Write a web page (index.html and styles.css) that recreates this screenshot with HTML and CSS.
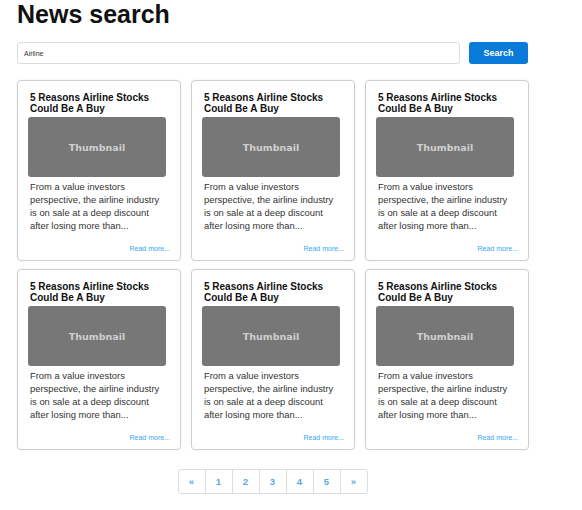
FILE: index.html
```html
<!DOCTYPE html>
<html lang="en">
<head>
    <meta charset="UTF-8">
    <meta name="viewport" content="width=device-width, initial-scale=1.0">
    <title>News search</title>
    <link rel="stylesheet" href="styles.css">
</head>
<body>
    <div id="container">
        <h1>News search</h1>

        <form class="search-bar">
            <input type="text" class="search-input" value="Airline">
            <button type="button" class="search-button">Search</button>
        </form>

        <div class="results">
            <div class="card">
                <h2 class="card-title">5 Reasons Airline Stocks Could Be A Buy</h2>
                <div class="thumb">Thumbnail</div>
                <p class="card-text">From a value investors perspective, the airline industry is on sale at a deep discount after losing more than...</p>
                <a class="read-more" href="#">Read more...</a>
            </div>
            <div class="card">
                <h2 class="card-title">5 Reasons Airline Stocks Could Be A Buy</h2>
                <div class="thumb">Thumbnail</div>
                <p class="card-text">From a value investors perspective, the airline industry is on sale at a deep discount after losing more than...</p>
                <a class="read-more" href="#">Read more...</a>
            </div>
            <div class="card">
                <h2 class="card-title">5 Reasons Airline Stocks Could Be A Buy</h2>
                <div class="thumb">Thumbnail</div>
                <p class="card-text">From a value investors perspective, the airline industry is on sale at a deep discount after losing more than...</p>
                <a class="read-more" href="#">Read more...</a>
            </div>
            <div class="card">
                <h2 class="card-title">5 Reasons Airline Stocks Could Be A Buy</h2>
                <div class="thumb">Thumbnail</div>
                <p class="card-text">From a value investors perspective, the airline industry is on sale at a deep discount after losing more than...</p>
                <a class="read-more" href="#">Read more...</a>
            </div>
            <div class="card">
                <h2 class="card-title">5 Reasons Airline Stocks Could Be A Buy</h2>
                <div class="thumb">Thumbnail</div>
                <p class="card-text">From a value investors perspective, the airline industry is on sale at a deep discount after losing more than...</p>
                <a class="read-more" href="#">Read more...</a>
            </div>
            <div class="card">
                <h2 class="card-title">5 Reasons Airline Stocks Could Be A Buy</h2>
                <div class="thumb">Thumbnail</div>
                <p class="card-text">From a value investors perspective, the airline industry is on sale at a deep discount after losing more than...</p>
                <a class="read-more" href="#">Read more...</a>
            </div>
        </div>

        <ul class="pagination">
            <li><a href="#">&laquo;</a></li>
            <li><a href="#">1</a></li>
            <li><a href="#">2</a></li>
            <li><a href="#">3</a></li>
            <li><a href="#">4</a></li>
            <li><a href="#">5</a></li>
            <li><a href="#">&raquo;</a></li>
        </ul>
    </div>
</body>
</html>
```

FILE: styles.css
```css
body {
    font-family: "Liberation Sans", Arial, sans-serif;
    background-color: #ffffff;
    color: #333;
    margin: 0;
    padding: 0 17px;
}

#container {
    width: 512px;
}

h1 {
    font-size: 25px;
    line-height: 25px;
    color: #111;
    margin: 0 0 15px 0;
    padding-top: 2px;
}

.search-bar {
    display: flex;
    gap: 9px;
    margin: 0 1px 16px 0;
}

.search-input {
    flex: 1;
    height: 22px;
    box-sizing: border-box;
    border: 1px solid #dcdcdc; /* gris claro */
    border-radius: 3px;
    padding: 0 6px;
    font-family: "Liberation Sans", Arial, sans-serif;
    font-size: 7px;
    color: #333;
    outline: none;
}

.search-button {
    width: 59px;
    height: 22px;
    border: none;
    border-radius: 3px;
    background-color: #0a7ad8; /* azul */
    color: #ffffff;
    font-family: "Liberation Sans", Arial, sans-serif;
    font-size: 9px;
    font-weight: bold;
    padding: 0;
}

.results {
    display: grid;
    grid-template-columns: repeat(3, 164px);
    column-gap: 10px;
    row-gap: 8px;
}

.card {
    border: 1px solid #cfcfcf;
    border-radius: 4px;
    padding: 12px 10px 7px 10px;
    box-shadow: 0 0 2px rgba(0, 0, 0, 0.08);
}

.card-title {
    font-size: 10px;
    line-height: 10.5px;
    font-weight: bold;
    color: #111;
    margin: 0 2px;
}

.thumb {
    width: 138px;
    height: 60px;
    margin: 3px 0;
    background-color: #777777;
    border-radius: 3px;
    display: flex;
    align-items: center;
    justify-content: center;
    font-family: "DejaVu Sans", sans-serif;
    font-size: 9.5px;
    font-weight: bold;
    color: #cfcfcf;
}

.card-text {
    font-size: 9.4px;
    line-height: 13px;
    color: #333;
    margin: 0 2px;
}

.read-more {
    display: block;
    margin-top: 12px;
    font-size: 7px;
    line-height: 9px;
    text-align: right;
    color: #3aa6f5; /* celeste */
    text-decoration: none;
}

.pagination {
    list-style: none;
    display: flex;
    justify-content: center;
    margin: 19px 0 0 0;
    padding: 0;
}

.pagination li a {
    display: flex;
    align-items: center;
    justify-content: center;
    width: 26px;
    height: 23px;
    border: 1px solid #dddddd;
    margin-left: -1px;
    font-size: 9.5px;
    font-weight: bold;
    color: #5aa7e6;
    text-decoration: none;
}

.pagination li:first-child a {
    border-radius: 3px 0 0 3px;
}

.pagination li:last-child a {
    border-radius: 0 3px 3px 0;
}
```
